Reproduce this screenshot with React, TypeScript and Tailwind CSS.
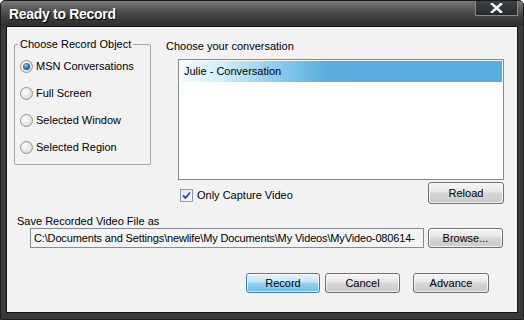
import type { ReactNode } from 'react'

const font = { fontFamily: '"Liberation Sans", Arial, sans-serif' }

function Radio({ checked, label }: { checked?: boolean; label: string }) {
  return (
    <div className="flex h-[27px] items-center">
      <span className="relative flex h-[13px] w-[13px] items-center justify-center rounded-full border border-[#8e9294] bg-[radial-gradient(circle_at_35%_35%,#ffffff_0%,#e6e6e6_55%,#c8c8c8_100%)]">
        {checked && (
          <span className="h-[7px] w-[7px] rounded-full bg-[radial-gradient(circle_at_40%_35%,#8fc3ec_0%,#2a6db0_50%,#0d3f78_100%)]" />
        )}
      </span>
      <span className="ml-[3px] text-[11px] leading-[13px] text-black">{label}</span>
    </div>
  )
}

function Button({ children, primary, className }: { children: ReactNode; primary?: boolean; className?: string }) {
  return (
    <button
      className={`flex items-center justify-center rounded-[3px] border text-[11px] leading-[13px] text-black shadow-[inset_0_0_0_1px_rgba(255,255,255,0.7)] ${
        primary
          ? 'border-[#3c7fb1] bg-[linear-gradient(to_bottom,#e8f6fd_0%,#c4e5f6_45%,#98d1ef_50%,#6fbde8_100%)]'
          : 'border-[#707070] bg-[linear-gradient(to_bottom,#f6f6f6_0%,#e6e6e6_45%,#d6d6d6_50%,#cbcbcb_100%)]'
      } ${className ?? ''}`}
    >
      {children}
    </button>
  )
}

export default function App() {
  return (
    <div style={font} className="flex h-[320px] w-[524px] flex-col overflow-hidden rounded-t-[5px] border border-[#1c1c1c] bg-[#3a3a3a]">
      {/* title bar */}
      <div className="relative flex h-[25px] shrink-0 items-start bg-[linear-gradient(to_bottom,#7a7a7a_0%,#5a5a5a_30%,#3c3c3c_70%,#2e2e2e_100%)]">
        <span className="ml-[8px] mt-[5px] text-[14px] font-bold leading-[16px] tracking-[-0.3px] text-white [text-shadow:1px_1px_1px_#000]">
          Ready to Record
        </span>
        <div className="absolute right-[5px] top-[-1px] flex h-[16px] w-[43px] items-center justify-center border border-[#8a8a8a] bg-[linear-gradient(to_bottom,#3c4144_0%,#252a2c_100%)]">
          <svg width="13" height="10" viewBox="0 0 13 10">
            <path d="M2 1 L11 9 M11 1 L2 9" stroke="#f4f4f4" strokeWidth="2.6" strokeLinecap="square" />
          </svg>
        </div>
      </div>

      {/* frame + content */}
      <div className="flex flex-1 flex-col px-[5px] pb-[6px]">
        <div className="flex flex-1 flex-col border border-[#151515] bg-[#f2f2f2] text-[11px] leading-[13px] text-black">
          <div className="flex items-start">
            {/* group box */}
            <div className="relative ml-[7px] mt-[17px] h-[121px] w-[137px] rounded-[2px] border border-[#a5a5a5]">
              <span className="absolute left-[3px] top-[-7px] bg-[#f2f2f2] px-[2px] leading-[13px]">
                Choose Record Object
              </span>
              <div className="flex flex-col pl-[5px] pt-[8px]">
                <Radio checked label="MSN Conversations" />
                <Radio label="Full Screen" />
                <Radio label="Selected Window" />
                <Radio label="Selected Region" />
              </div>
            </div>

            {/* conversation column */}
            <div className="ml-[15px] flex w-[338px] flex-col pt-[12px]">
              <span className="leading-[14px]">Choose your conversation</span>
              <div className="ml-[12px] mt-[6px] h-[121px] w-[326px] border border-[#828790] bg-white p-px">
                <div className="flex h-[21px] items-center bg-[linear-gradient(to_right,#f2fbfe_0%,#d6eff9_12%,#8ccbec_30%,#5aafdf_45%,#56ade0_100%)] pl-[4px]">
                  Julie - Conversation
                </div>
              </div>
              <div className="mt-[2px] flex h-[22px] items-center">
                <span className="ml-[14px] mt-[5px] flex h-[13px] w-[13px] items-center justify-center border border-[#8e9aa8] bg-[linear-gradient(to_bottom_right,#dfe6ef_0%,#f7f9fc_100%)]">
                  <svg width="9" height="9" viewBox="0 0 9 9">
                    <path d="M1 4.5 L3.5 7 L8 1.5" fill="none" stroke="#2b48a8" strokeWidth="1.8" />
                  </svg>
                </span>
                <span className="ml-[4px] mt-[5px]">Only Capture Video</span>
                <Button className="ml-auto h-[22px] w-[76px]">Reload</Button>
              </div>
            </div>
          </div>

          <span className="ml-[10px] mt-[11px]">Save Recorded Video File as</span>
          <div className="flex">
            <div className="ml-[23px] flex h-[20px] w-[394px] items-center overflow-hidden whitespace-nowrap border border-[#7f8c99] bg-[#f4f4f4] pl-[3px] tracking-[-0.15px]">
              C:\Documents and Settings\newlife\My Documents\My Videos\MyVideo-080614-
            </div>
            <Button className="ml-[4px] h-[20px] w-[75px]">Browse...</Button>
          </div>

          <div className="mt-[25px] flex justify-end pr-[28px]">
            <Button primary className="h-[20px] w-[74px]">Record</Button>
            <Button className="ml-[5px] h-[20px] w-[75px]">Cancel</Button>
            <Button className="ml-[13px] h-[20px] w-[76px]">Advance</Button>
          </div>
        </div>
      </div>
    </div>
  )
}
